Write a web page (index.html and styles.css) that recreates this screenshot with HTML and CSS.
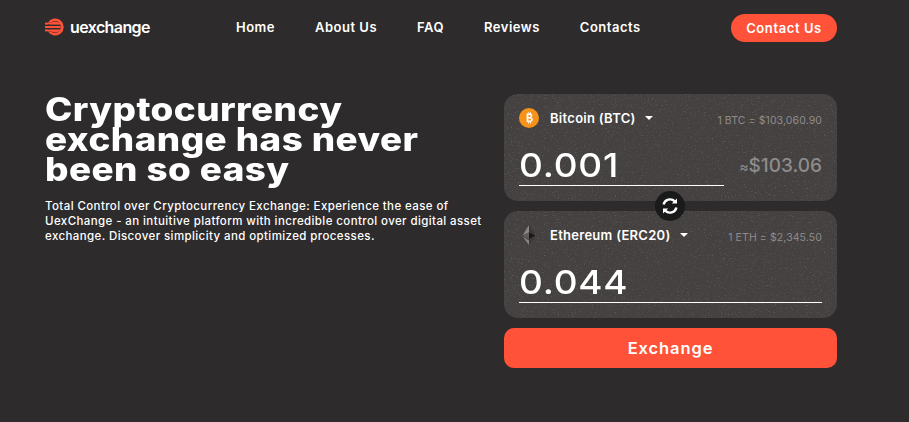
FILE: index.html
```html
<!DOCTYPE html>
<html lang="en">
<head>
  <meta charset="UTF-8" />
  <title>UexChange</title>
  <link rel="stylesheet" href="styles.css">
</head>
<body>
  <header class="header">
    <a class="logo" href="#">
      <svg class="logo-icon" width="20" height="20" viewBox="0 0 20 20">
        <path d="M3 5.5A8.5 8.5 0 1 1 3 14.5L6 14.5A6 6 0 1 0 6 5.5Z" fill="#ff5238"/>
        <circle cx="10" cy="10" r="5.6" fill="#ff5238"/>
        <rect x="0" y="5.6" width="15" height="2" fill="#ff5238"/>
        <rect x="0" y="9" width="15" height="2" fill="#ff5238"/>
        <rect x="0" y="12.4" width="15" height="2" fill="#ff5238"/>
        <rect x="3" y="7.6" width="12" height="1.4" fill="#2d2b2c"/>
        <rect x="3" y="11" width="12" height="1.4" fill="#2d2b2c"/>
      </svg>
      <span class="logo-text">uexchange</span>
    </a>
    <nav class="nav">
      <a href="#">Home</a>
      <a href="#">About Us</a>
      <a href="#">FAQ</a>
      <a href="#">Reviews</a>
      <a href="#">Contacts</a>
    </nav>
    <a class="contact-btn" href="#">Contact Us</a>
  </header>

  <main class="main">
    <section class="intro">
      <h1>Cryptocurrency exchange has never been so easy</h1>
      <p>Total Control over Cryptocurrency Exchange: Experience the ease of<br>UexChange - an intuitive platform with incredible control over digital asset<br>exchange. Discover simplicity and optimized processes.</p>
    </section>

    <section class="widget">
      <div class="card">
        <div class="card-top">
          <div class="coin">
            <svg width="20" height="20" viewBox="0 0 20 20">
              <circle cx="10" cy="10" r="10" fill="#f7931a"/>
              <path d="M7.6 5.6h3.2c1.6 0 2.5.8 2.5 2 0 .9-.5 1.6-1.3 1.8 1.1.2 1.8 1 1.8 2.1 0 1.5-1.1 2.5-2.9 2.5H7.6ZM9.4 7.1v2h1.2c.7 0 1-.4 1-1s-.4-1-1-1ZM9.4 10.5v2.1h1.5c.7 0 1.1-.4 1.1-1.1s-.4-1-1.1-1ZM8.9 4.2h1v1.6h-1ZM10.9 4.2h1v1.6h-1ZM8.9 13.8h1v1.8h-1ZM10.9 13.8h1v1.8h-1Z" fill="#fff" fill-rule="evenodd"/>
            </svg>
            <span class="coin-name">Bitcoin (BTC)</span>
            <span class="caret"></span>
          </div>
          <span class="rate">1 BTC = $103,060.90</span>
        </div>
        <div class="card-bottom">
          <div class="amount amount-short"><span>0.001</span></div>
          <div class="usd"><small>≈</small>$103.06</div>
        </div>
      </div>

      <div class="swap">
        <svg width="18" height="18" viewBox="0 0 18 18" fill="none" stroke="#fff" stroke-width="2.4">
          <path d="M2.6 7.6A6.6 6.6 0 0 1 13.8 4.4"/>
          <path d="M15.4 10.4A6.6 6.6 0 0 1 4.2 13.6"/>
          <path d="M16 1.4v5.2h-5.2Z" fill="#fff" stroke="none"/>
          <path d="M2 16.6v-5.2h5.2Z" fill="#fff" stroke="none"/>
        </svg>
      </div>

      <div class="card">
        <div class="card-top">
          <div class="coin">
            <svg width="20" height="20" viewBox="0 0 20 20">
              <path d="M10 0 3.6 10.4 10 7.4Z" fill="#8a8886"/>
              <path d="M10 7.4 3.6 10.4 10 14.2Z" fill="#5f5d5c"/>
              <path d="M10 0V7.4L16.4 10.4Z" fill="#3a3837"/>
              <path d="M10 7.4V14.2L16.4 10.4Z" fill="#191817"/>
              <path d="M3.6 11.6 10 20V15.4Z" fill="#8a8886"/>
              <path d="M16.4 11.6 10 20V15.4Z" fill="#3a3837"/>
            </svg>
            <span class="coin-name">Ethereum (ERC20)</span>
            <span class="caret"></span>
          </div>
          <span class="rate">1 ETH = $2,345.50</span>
        </div>
        <div class="card-bottom">
          <div class="amount"><span>0.044</span></div>
        </div>
      </div>

      <button class="exchange-btn">Exchange</button>
    </section>
  </main>
</body>
</html>
```

FILE: styles.css
```css
:root {
  --bg: #2d2b2c;
  --card: #444140;
  --accent: #ff5238;
  --muted: #8f8c8b;
}

* {
  box-sizing: border-box;
}

body {
  margin: 0;
  height: 422px;
  overflow: hidden;
  background: var(--bg);
  color: #fff;
  font-family: Inter, sans-serif;
}

a {
  color: inherit;
  text-decoration: none;
}

.header {
  display: flex;
  align-items: center;
  height: 56px;
  padding: 0 72px 0 45px;
}

.logo {
  display: flex;
  align-items: center;
  gap: 5px;
  width: 191px;
  margin-bottom: 2px;
}

.logo-text {
  font-size: 16px;
  font-weight: 600;
  letter-spacing: -0.6px;
}

.nav {
  display: flex;
  gap: 40px;
  margin-bottom: 2px;
  font-size: 13px;
  font-weight: 600;
  letter-spacing: 0.5px;
}

.contact-btn {
  margin-left: auto;
  width: 106px;
  height: 28px;
  line-height: 28px;
  text-align: center;
  border-radius: 14px;
  background: var(--accent);
  font-size: 13px;
  font-weight: 600;
  letter-spacing: 0.6px;
}

.main {
  display: flex;
  justify-content: space-between;
  padding: 38px 72px 0 45px;
}

.intro {
  width: 420px;
}

/* no wide display face installed, so the heading is stretched */
h1 {
  width: 340px;
  margin: 1px 0 14px;
  font-size: 32px;
  line-height: 30px;
  font-weight: 800;
  letter-spacing: 0.4px;
  transform: scaleX(1.15);
  transform-origin: left top;
}

.intro p {
  margin: 0;
  font-size: 11.5px;
  line-height: 15px;
  font-weight: 500;
  letter-spacing: 0.4px;
  white-space: nowrap;
}

.widget {
  position: relative;
  display: flex;
  flex-direction: column;
  gap: 10px;
  width: 333px;
}

.card {
  height: 107px;
  padding: 13px 15px 0;
  border-radius: 14px;
  background-color: var(--card);
  background-image: url("data:image/svg+xml,%3Csvg xmlns='http://www.w3.org/2000/svg' width='333' height='107'%3E%3Cfilter id='n'%3E%3CfeTurbulence type='fractalNoise' baseFrequency='.7' numOctaves='2'/%3E%3CfeColorMatrix values='0 0 0 0 1 0 0 0 0 1 0 0 0 0 1 4 0 0 0 -2.4'/%3E%3C/filter%3E%3Crect width='333' height='107' filter='url(%23n)' opacity='.14'/%3E%3C/svg%3E");
}

.card-top {
  display: flex;
  align-items: center;
  justify-content: space-between;
  height: 22px;
}

.coin {
  display: flex;
  align-items: center;
}

.coin-name {
  margin-left: 11px;
  font-size: 13px;
  font-weight: 600;
  letter-spacing: 0.28px;
}

.caret {
  margin-left: 9px;
  border: 4px solid transparent;
  border-top: 4px solid #fff;
  border-bottom: 0;
}

.rate {
  margin-top: 4px;
  font-size: 10.5px;
  letter-spacing: 0.1px;
  color: var(--muted);
}

.card-bottom {
  display: flex;
  align-items: flex-end;
  justify-content: space-between;
  margin-top: 16px;
}

.amount {
  flex: 1;
  height: 41px;
  font-size: 33px;
  line-height: 40px;
  font-weight: 500;
  border-bottom: 1px solid #fff;
}

.amount span {
  display: inline-block;
  letter-spacing: 0.7px;
  transform: scaleX(1.12);
  transform-origin: left center;
}

.amount-short {
  flex: none;
  width: 205px;
}

.usd {
  margin-bottom: 9px;
  font-size: 19px;
  font-weight: 500;
  color: var(--muted);
}

.usd small {
  font-size: 14px;
}

.swap {
  position: absolute;
  top: 97px;
  left: 151px;
  display: flex;
  align-items: center;
  justify-content: center;
  width: 30px;
  height: 30px;
  border-radius: 50%;
  background: #1a1a1a;
}

.exchange-btn {
  height: 40px;
  border: none;
  border-radius: 10px;
  background: var(--accent);
  color: #fff;
  font-family: inherit;
  font-size: 16.5px;
  font-weight: 600;
  letter-spacing: 0.9px;
}
```
